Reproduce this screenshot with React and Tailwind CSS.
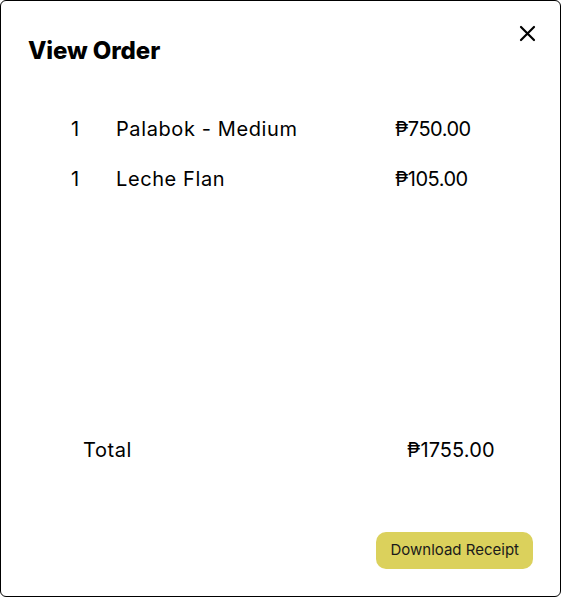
export default function App() {
  const items = [
    { qty: 1, name: "Palabok - Medium", price: "₱750.00" },
    { qty: 1, name: "Leche Flan", price: "₱105.00" },
  ];
  return (
    <div className="w-[561px] h-[597px] bg-white">
      <div
        className="relative w-full h-full border border-black rounded-[6px] flex flex-col text-black"
        style={{ fontFamily: "Inter, 'Noto Sans', sans-serif" }}
      >
        <button className="absolute left-[517px] top-[23px] w-[19px] h-[19px] flex items-center justify-center">
          <svg width="17" height="17" viewBox="0 0 17 17" fill="none" stroke="#000" strokeWidth="2.2" strokeLinecap="round">
            <path d="M2 2L15 15M15 2L2 15" />
          </svg>
        </button>
        <h1 className="pl-[27px] pt-[34px] text-[24px] font-extrabold leading-[32px] tracking-[-0.1px]">View Order</h1>
        <div className="mt-[49px] flex flex-col gap-[24px]">
          {items.map((it, i) => (
            <div key={i} className="flex items-center text-[20px] leading-[26px]">
              <span className="w-[115px] pl-[70px]">{it.qty}</span>
              <span className="w-[279px] tracking-[0.6px]">{it.name}</span>
              <span className="tracking-[-0.5px]">{it.price}</span>
            </div>
          ))}
        </div>
        <div className="flex-1" />
        <div className="flex items-center text-[20px] leading-[26px]">
          <span className="w-[406px] pl-[82px] tracking-[0.6px]">Total</span>
          <span className="tracking-[0.1px]">₱1755.00</span>
        </div>
        <div className="flex justify-end pr-[27px] pt-[69px] pb-[27px]">
          <button className="h-[37px] px-[14px] rounded-[10px] bg-[#dbd15c] text-[15px] text-[#1a1a1a]">
            Download Receipt
          </button>
        </div>
      </div>
    </div>
  );
}
